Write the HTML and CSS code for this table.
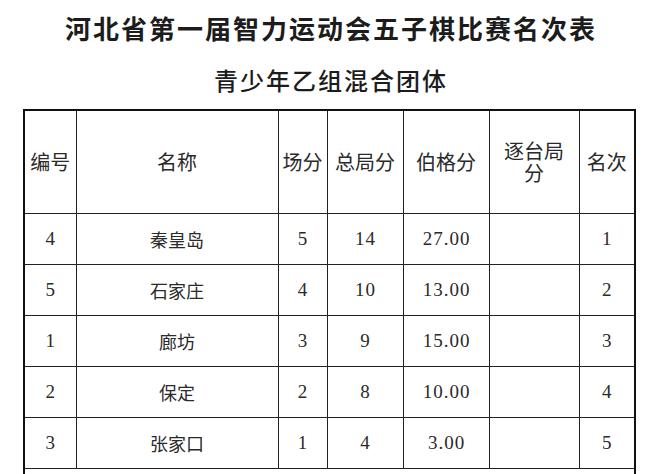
FILE: index.html
```html
<!DOCTYPE html>
<html lang="zh">
<head>
<meta charset="utf-8">
<link rel="stylesheet" href="styles.css">
</head>
<body>
<h1 class="title">河北省第一届智力运动会五子棋比赛名次表</h1>
<h2 class="subtitle">青少年乙组混合团体</h2>
<table class="rank">
  <colgroup>
    <col class="c1"><col class="c2"><col class="c3"><col class="c4"><col class="c5"><col class="c6"><col class="c7">
  </colgroup>
  <thead>
    <tr class="head">
      <th>编号</th><th>名称</th><th>场分</th><th>总局分</th><th>伯格分</th><th class="two"><span class="ln">逐台局</span><span class="ln">分</span></th><th>名次</th>
    </tr>
  </thead>
  <tbody>
    <tr><td class="num">4</td><td class="name">秦皇岛</td><td class="num">5</td><td class="num">14</td><td class="num">27.00</td><td></td><td class="num">1</td></tr>
    <tr><td class="num">5</td><td class="name">石家庄</td><td class="num">4</td><td class="num">10</td><td class="num">13.00</td><td></td><td class="num">2</td></tr>
    <tr><td class="num">1</td><td class="name">廊坊</td><td class="num">3</td><td class="num">9</td><td class="num">15.00</td><td></td><td class="num">3</td></tr>
    <tr><td class="num">2</td><td class="name">保定</td><td class="num">2</td><td class="num">8</td><td class="num">10.00</td><td></td><td class="num">4</td></tr>
    <tr><td class="num">3</td><td class="name">张家口</td><td class="num">1</td><td class="num">4</td><td class="num">3.00</td><td></td><td class="num">5</td></tr>
    <tr class="note"><td colspan="7"></td></tr>
  </tbody>
</table>
</body>
</html>
```
FILE: styles.css
```css
html, body {
  margin: 0;
  padding: 0;
  background: #fff;
  color: #1c1c1c;
  font-family: "Noto Sans CJK SC", "Noto Sans", sans-serif;
}

.title {
  margin: 0;
  padding-top: 11px;
  height: 38px;
  font-size: 26px;
  line-height: 34px;
  font-weight: 700;
  letter-spacing: 2px;
  text-align: center;
  text-indent: 2px;
}

.subtitle {
  margin: 0;
  padding-top: 16px;
  height: 44px;
  font-size: 24px;
  line-height: 30px;
  font-weight: 500;
  letter-spacing: 2px;
  text-align: center;
  text-indent: 2px;
}

.rank {
  margin-left: 23px;
  width: 611px;
  table-layout: fixed;
  border-collapse: collapse;
  border: 2px solid #111;
}

.c1 { width: 52px; }
.c2 { width: 202px; }
.c3 { width: 49px; }
.c4 { width: 76px; }
.c5 { width: 86px; }
.c6 { width: 90px; }
.c7 { width: 56px; }

.rank th,
.rank td {
  border: 1px solid #222;
  padding: 0;
  text-align: center;
  vertical-align: middle;
}

.rank th {
  height: 102px;
  font-size: 20px;
  font-weight: 400;
  line-height: 22px;
  color: #2a2a2a;
}

.rank th.two .ln {
  display: block;
  line-height: 22px;
}

.rank td {
  height: 50px;
  font-size: 18px;
  color: #2a2a2a;
}

.rank td.num {
  font-family: "Liberation Serif", "DejaVu Serif", serif;
  font-size: 19px;
  letter-spacing: 1px;
  text-indent: 1px;
}

.rank .note td {
  height: 30px;
}
```
